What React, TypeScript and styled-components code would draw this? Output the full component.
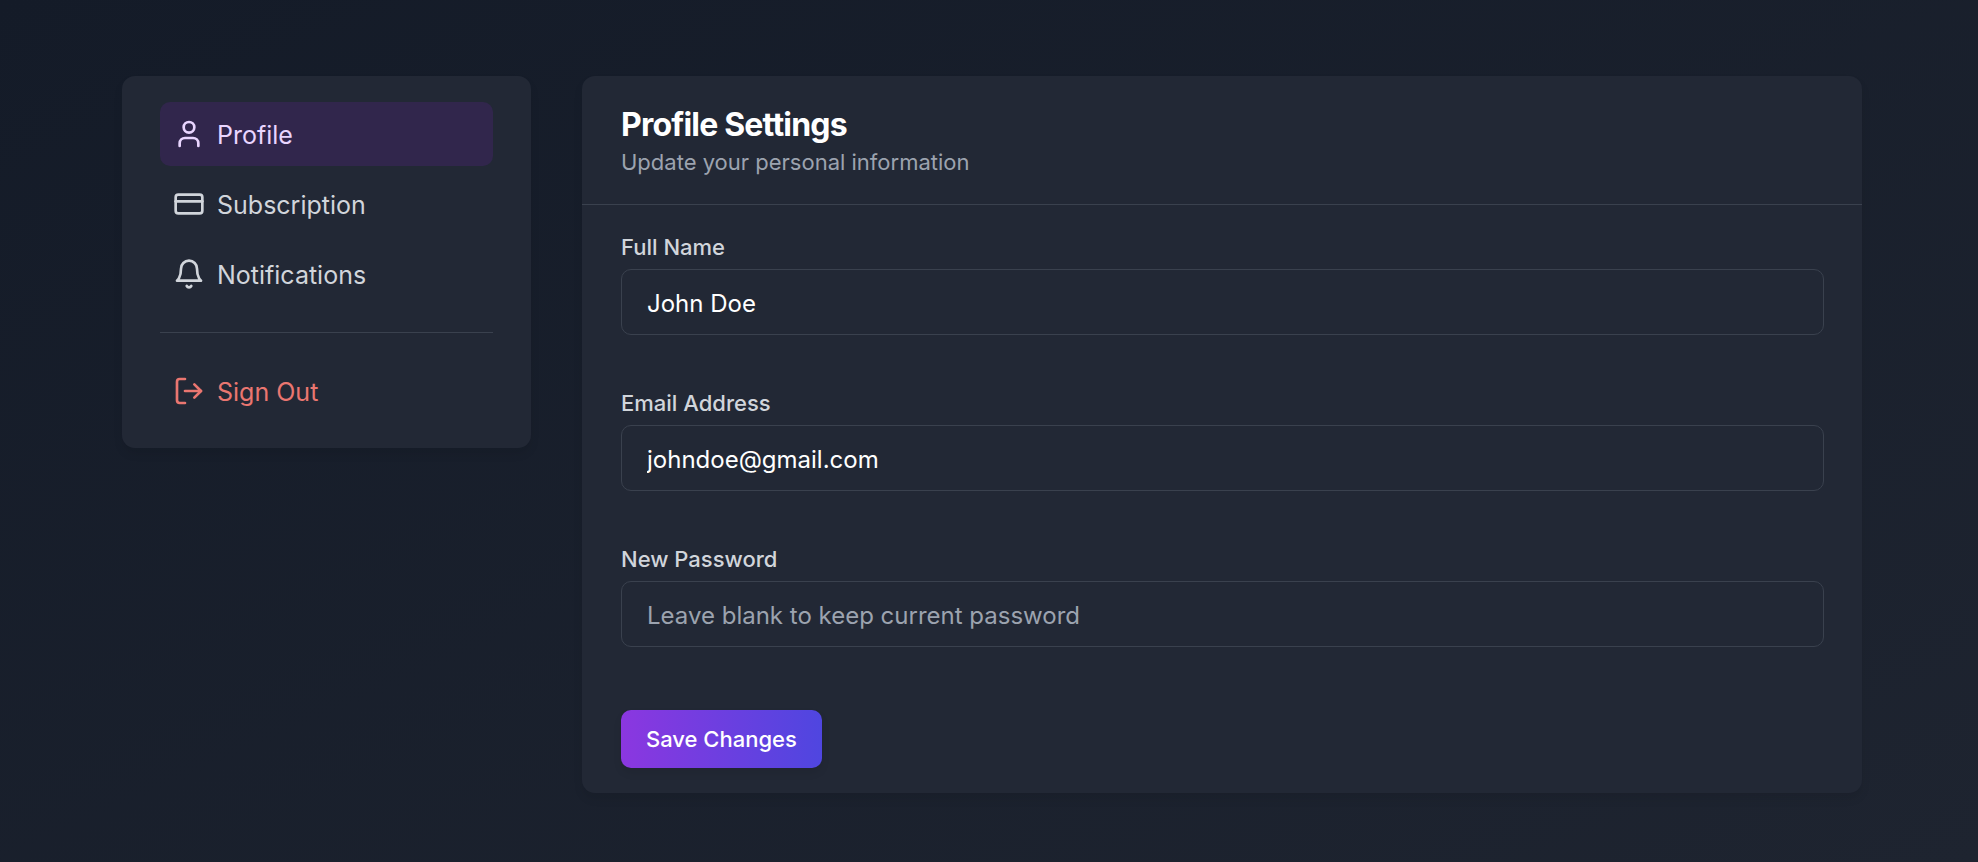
import React from "react";
import styled, { createGlobalStyle, css } from "styled-components";
import { CreditCard, LogOut, User } from "lucide-react";

const GlobalStyle = createGlobalStyle`
  *, *::before, *::after { box-sizing: border-box; }
  body {
    margin: 0;
    font-family: Inter, "Liberation Sans", sans-serif;
    background: #141b28;
    color: #ffffff;
  }
`;

const Page = styled.div`
  min-height: 100vh;
  padding: 76px 116px 69px 122px;
  background: linear-gradient(to bottom right, #141b28, #1e2430);
`;

const Columns = styled.div`
  display: grid;
  grid-template-columns: minmax(300px, 409fr) minmax(0, 1280fr);
  gap: 51px;
  align-items: start;
`;

const Card = styled.div`
  border-radius: 13px;
  background: #222835;
  box-shadow: 0 6px 10px rgba(0, 0, 0, 0.08);
`;

const Sidebar = styled(Card)`
  padding: 26px 38px 25px;
`;

const NavList = styled.nav`
  display: flex;
  flex-direction: column;
  gap: 6px;
`;

const navItem = css`
  display: flex;
  align-items: center;
  gap: 12px;
  width: 100%;
  height: 64px;
  padding: 0 13px;
  border: 0;
  border-radius: 10px;
  font: 400 25px/38px Inter, "Liberation Sans", sans-serif;
  text-decoration: none;
`;

const NavLink = styled.a<{ $active?: boolean }>`
  ${navItem}
  background: ${(p) => (p.$active ? "#31264c" : "transparent")};
  color: ${(p) => (p.$active ? "#e9d5ff" : "#d1d5db")};
`;

const NavText = styled.span`
  padding-top: 2px;
`;

const Divider = styled.hr`
  height: 1px;
  margin: 26px 0;
  border: 0;
  background: #3a414e;
`;

const SignOut = styled.button`
  ${navItem}
  background: transparent;
  color: #ea7670;
  cursor: pointer;
`;

const CardHeader = styled.header`
  padding: 28px 38px 26px 39px;
  border-bottom: 1px solid #3a414e;
`;

const Title = styled.h1`
  margin: 0;
  font-size: 32px;
  line-height: 42px;
  font-weight: 700;
  letter-spacing: -0.025em;
`;

const Subtitle = styled.p`
  margin: 0;
  font-size: 22px;
  line-height: 32px;
  color: #9ca3af;
`;

const Form = styled.form`
  display: flex;
  flex-direction: column;
  align-items: flex-start;
  gap: 57px;
  padding: 31px 38px 25px 39px;
`;

const Field = styled.div`
  display: flex;
  flex-direction: column;
  gap: 11px;
  width: 100%;
`;

const Label = styled.label`
  font-size: 22px;
  line-height: 22px;
  font-weight: 500;
  color: #d1d5db;
`;

const Input = styled.input`
  width: 100%;
  height: 66px;
  padding: 2px 25px 0;
  border: 1px solid #3a414e;
  border-radius: 10px;
  background: transparent;
  color: #ffffff;
  font: 400 24px/38px Inter, "Liberation Sans", sans-serif;

  &::placeholder {
    color: #9ca3af;
    opacity: 1;
  }
`;

const SaveButton = styled.button`
  height: 58px;
  margin-top: 6px;
  padding: 0 25px;
  border: 0;
  border-radius: 10px;
  background: linear-gradient(to right, #8b37e0, #4f46e0);
  box-shadow: 0 5px 8px rgba(0, 0, 0, 0.08);
  color: #ffffff;
  font: 500 22px/32px Inter, "Liberation Sans", sans-serif;
  cursor: pointer;
`;

const iconProps = { size: 32, strokeWidth: 2, "aria-hidden": true };

/* Bell with a flat, sharp-cornered rim */
function BellIcon() {
  return (
    <svg
      width="32"
      height="32"
      viewBox="0 0 24 24"
      fill="none"
      stroke="currentColor"
      strokeWidth="2"
      strokeLinecap="round"
      strokeLinejoin="round"
      aria-hidden="true"
    >
      <path d="M6 8a6 6 0 0 1 12 0c0 7 3 9 3 9H3s3-2 3-9" />
      <path d="M10.3 21a1.94 1.94 0 0 0 3.4 0" />
    </svg>
  );
}

export default function App() {
  return (
    <>
      <GlobalStyle />
      <Page>
        <Columns>
          <Sidebar as="aside">
            <NavList>
              <NavLink href="#profile" $active aria-current="page">
                <User {...iconProps} />
                <NavText>Profile</NavText>
              </NavLink>
              <NavLink href="#subscription">
                <CreditCard {...iconProps} />
                <NavText>Subscription</NavText>
              </NavLink>
              <NavLink href="#notifications">
                <BellIcon />
                <NavText>Notifications</NavText>
              </NavLink>
            </NavList>
            <Divider />
            <SignOut type="button">
              <LogOut {...iconProps} />
              <NavText>Sign Out</NavText>
            </SignOut>
          </Sidebar>
          <Card as="main">
            <CardHeader>
              <Title>Profile Settings</Title>
              <Subtitle>Update your personal information</Subtitle>
            </CardHeader>
            <Form onSubmit={(e: React.FormEvent) => e.preventDefault()}>
              <Field>
                <Label htmlFor="name">Full Name</Label>
                <Input id="name" type="text" defaultValue="John Doe" />
              </Field>
              <Field>
                <Label htmlFor="email">Email Address</Label>
                <Input id="email" type="email" defaultValue="johndoe@gmail.com" />
              </Field>
              <Field>
                <Label htmlFor="password">New Password</Label>
                <Input id="password" type="password" placeholder="Leave blank to keep current password" />
              </Field>
              <SaveButton type="submit">Save Changes</SaveButton>
            </Form>
          </Card>
        </Columns>
      </Page>
    </>
  );
}
